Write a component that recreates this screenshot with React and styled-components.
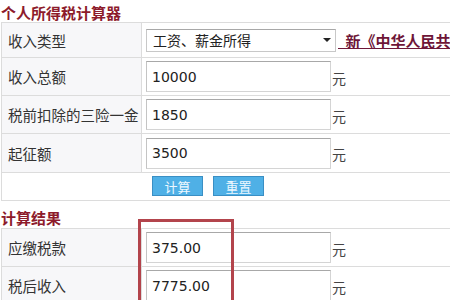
import React from "react";
import styled, { createGlobalStyle } from "styled-components";

const Global = createGlobalStyle`
  *, *::before, *::after { box-sizing: border-box; }
  html, body { margin: 0; padding: 0; background: #fff; }
  body { font-family: "Noto Sans CJK SC", "Liberation Sans", sans-serif; color: #333; }
`;

const Page = styled.div`
  position: relative;
  width: 450px;
  height: 300px;
  overflow: hidden;
  background: #fff;
`;

const Title = styled.div`
  height: ${(p) => p.$h}px;
  padding-left: 1px;
  display: flex;
  align-items: flex-end;
  font-size: 15px;
  font-weight: bold;
  color: #8d1b2b;
  line-height: 1;
  padding-bottom: ${(p) => p.$pb}px;
`;

const Table = styled.div`
  margin-left: 1px;
  border-top: 1px solid #dcdcdc;
  border-left: 1px solid #dcdcdc;
  display: flex;
  flex-direction: column;
`;

const Row = styled.div`
  display: grid;
  grid-template-columns: 140px 1fr;
  height: ${(p) => p.$h}px;
  border-bottom: 1px solid #dcdcdc;
`;

const Label = styled.div`
  background: #f7f7f9;
  border-right: 1px solid #dcdcdc;
  display: flex;
  align-items: center;
  padding-left: 6px;
  font-size: 14.5px;
  color: #333;
`;

const Cell = styled.div`
  display: flex;
  align-items: center;
  padding-left: 4px;
  white-space: nowrap;
`;

const Field = styled.div`
  flex: none;
  width: 185px;
  height: 31px;
  border: 1px solid #d4d4d4;
  border-top-color: #a8a8a8;
  border-left-color: #c4c4c4;
  background: #fff;
  display: flex;
  align-items: center;
  padding-left: 5px;
  font-family: "DejaVu Sans", "Liberation Sans", sans-serif;
  font-size: 14px;
  color: #222;
`;

const Unit = styled.span`
  font-size: 14px;
  color: #444;
  margin-left: 1px;
  padding-top: 2px;
`;

const Select = styled.div`
  flex: none;
  width: 190px;
  height: 23px;
  border: 1px solid #c8c8c8;
  border-top-color: #a8a8a8;
  display: flex;
  align-items: center;
  justify-content: space-between;
  padding: 0 4px 0 6px;
  font-size: 14px;
  color: #222;
`;

const Arrow = styled.span`
  width: 0;
  height: 0;
  border-left: 4px solid transparent;
  border-right: 4px solid transparent;
  border-top: 4px solid #222;
`;

const Link = styled.a`
  margin-left: 2px;
  font-size: 15px;
  font-weight: bold;
  color: #6e1638;
  text-decoration: underline;
  white-space: pre;
  line-height: 1;
`;

const ButtonRow = styled.div`
  height: 28px;
  border-bottom: 1px solid #dcdcdc;
  display: flex;
  align-items: flex-start;
  padding-top: 3px;
  padding-left: 150px;
  gap: 10px;
`;

const Button = styled.div`
  width: 51px;
  height: 20px;
  background: #4fb0e6;
  border: 1px solid #3a8fc4;
  color: #eef8ff;
  font-size: 13px;
  display: flex;
  align-items: center;
  justify-content: center;
`;

const Highlight = styled.div`
  position: absolute;
  left: 138px;
  top: 219px;
  width: 96px;
  height: 120px;
  border: 3px solid #b3444c;
`;

const inputs = [
  { label: "收入总额", value: "10000", h: 38 },
  { label: "税前扣除的三险一金", value: "1850", h: 38 },
  { label: "起征额", value: "3500", h: 39 },
];

const results = [
  { label: "应缴税款", value: "375.00", h: 38 },
  { label: "税后收入", value: "7775.00", h: 38 },
];

export default function App() {
  return (
    <Page>
      <Global />
      <Title $h={22} $pb={2}>个人所得税计算器</Title>
      <Table>
        <Row $h={35}>
          <Label>收入类型</Label>
          <Cell>
            <Select>
              <span>工资、薪金所得</span>
              <Arrow />
            </Select>
            <Link>{"\u2002新《中华人民共和国个人所得税法》"}</Link>
          </Cell>
        </Row>
        {inputs.map((r) => (
          <Row key={r.label} $h={r.h}>
            <Label>{r.label}</Label>
            <Cell>
              <Field>{r.value}</Field>
              <Unit>元</Unit>
            </Cell>
          </Row>
        ))}
        <ButtonRow>
          <Button>计算</Button>
          <Button>重置</Button>
        </ButtonRow>
      </Table>
      <Title $h={27} $pb={3}>计算结果</Title>
      <Table>
        {results.map((r) => (
          <Row key={r.label} $h={r.h}>
            <Label>{r.label}</Label>
            <Cell>
              <Field>{r.value}</Field>
              <Unit>元</Unit>
            </Cell>
          </Row>
        ))}
      </Table>
      <Highlight />
    </Page>
  );
}
